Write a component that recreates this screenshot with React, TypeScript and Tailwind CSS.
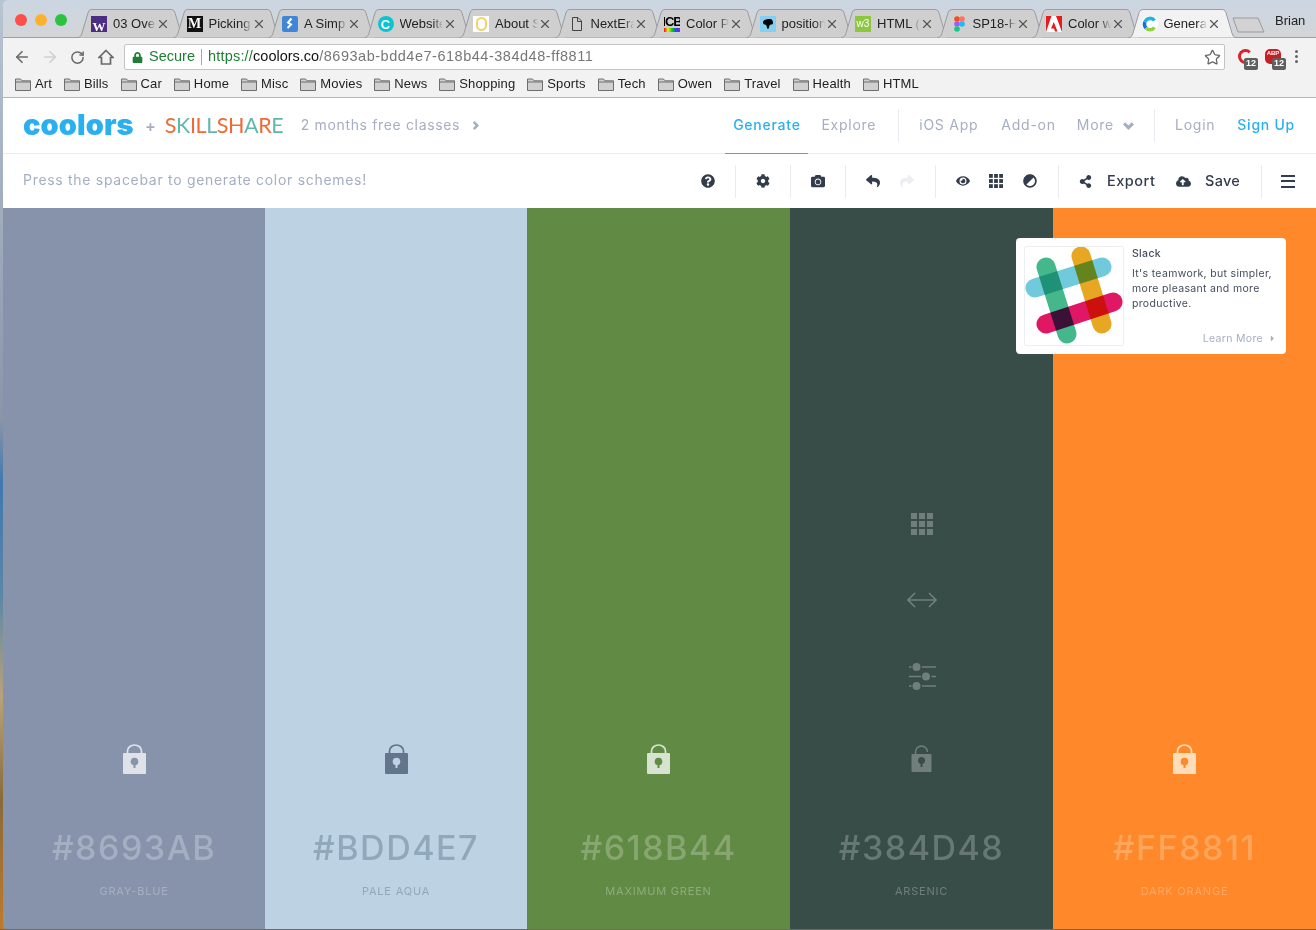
import React from "react";
import { ArrowLeft, ArrowRight, RotateCw, Star, X } from "lucide-react";
import { FaQuestionCircle, FaCog, FaCamera, FaReply, FaShare, FaEye, FaAdjust, FaShareAlt, FaCloudUploadAlt, FaLock, FaCaretRight } from "react-icons/fa";

const gotham = "font-['Inter',sans-serif]";

function Box({ className, children }: { className: string; children?: React.ReactNode }) {
  return <div className={`flex h-[16px] w-[16px] shrink-0 items-center justify-center overflow-hidden ${className}`}>{children}</div>;
}

function Doc() {
  return (
    <svg width="16" height="16" viewBox="0 0 16 16" fill="none" stroke="#444" strokeWidth="1"><path d="M3.500 1.500h5.500l3.500 3.500v9.500h-9zM8.500 1.500v4h4" /></svg>
  );
}

function Fig() {
  return (
    <svg width="16" height="16" viewBox="0 0 16 16">
      <circle cx="6" cy="3" r="2.800" fill="#f24e1e" /><circle cx="11" cy="3" r="2.800" fill="#ff7262" />
      <circle cx="6" cy="8" r="2.800" fill="#a259ff" /><circle cx="11" cy="8" r="2.800" fill="#1abcfe" />
      <circle cx="6" cy="13" r="2.800" fill="#0acf83" />
    </svg>
  );
}

function Adobe() {
  return (
    <svg width="16" height="16" viewBox="0 0 16 16">
      <rect width="16" height="16" fill="#fff" />
      <polygon points="0,0 5.500,0 0,16" fill="#e61b1b" /><polygon points="10,0 16,0 16,16" fill="#e61b1b" /><polygon points="7.800,6 11.500,15.500 9,15.500 8,12.500 5,12.500" fill="#e61b1b" />
    </svg>
  );
}

function CoolorsFav() {
  return (
    <svg width="16" height="16" viewBox="0 0 16 16" fill="none" strokeWidth="3.500">
      <circle cx="8" cy="8" r="8" fill="#fff" />
      <path d="M12.500 4.500A5.500 5.500 0 0 0 3 6" stroke="#1fb6d8" /><path d="M3 6a5.500 5.500 0 0 0 1 6" stroke="#1b6fd8" /><path d="M4 12a5.500 5.500 0 0 0 8.500 -.5" stroke="#8fd43a" />
    </svg>
  );
}

function Simp() {
  return (
    <svg width="16" height="16" viewBox="0 0 16 16" fill="none" stroke="#fff" strokeWidth="2"><rect width="16" height="16" rx="2" fill="#3f86d8" stroke="none" /><path d="M9.500 2.500L6 6.500l3 2-3.500 3.500" /></svg>
  );
}

function Bird() {
  return (
    <svg width="16" height="16" viewBox="0 0 16 16"><rect width="16" height="16" fill="#84d0f2" /><path d="M3 6c1-3 5-3 7-3s3 2 3 4-2 1-3 2-1 4-2 4-1-3-2-4-3 0-3-3z" fill="#000" /></svg>
  );
}

function Chevron({ down, className, size = 9 }: { down?: boolean; className?: string; size?: number }) {
  return (
    <svg className={className} width={size} height={size} viewBox="0 0 10 10" fill="none" stroke="#a5afc1" strokeWidth="2.800">
      <path d={down ? "M1 3l4 4 4-4" : "M3 1l4 4-4 4"} />
    </svg>
  );
}

const tabs: { t: string; icon: React.ReactNode }[] = [
  { t: "03 Ove", icon: <Box className="bg-[#4b2e83] !items-end"><span className="font-['Liberation_Serif',serif] text-[13px] font-bold leading-[11px] text-white">W</span></Box> },
  { t: "Picking", icon: <Box className="bg-[#111]"><span className="font-['Liberation_Serif',serif] text-[14px] font-bold leading-none text-white">M</span></Box> },
  { t: "A Simp", icon: <Simp /> },
  { t: "Website", icon: <Box className="rounded-full bg-[#0cc4cf]"><span className="font-['Liberation_Sans',sans-serif] text-[13px] font-bold leading-none text-white">C</span></Box> },
  { t: "About S", icon: <Box className="bg-white"><span className="block h-[14px] w-[11px] rounded-full border-[2px] border-[#f2d36b]" /></Box> },
  { t: "NextEra", icon: <Doc /> },
  { t: "Color P", icon: <div className="flex h-[16px] w-[16px] shrink-0 flex-col items-center overflow-hidden"><span className="font-['Liberation_Sans',sans-serif] text-[13px] font-bold leading-[12px] tracking-[-1px] text-black">ICB</span><span className="h-[4px] w-full bg-[linear-gradient(90deg,#e11,#ee1_25%,#1c1_50%,#15e_75%,#a1e)]" /></div> },
  { t: "position", icon: <Bird /> },
  { t: "HTML (", icon: <Box className="bg-[#8dc63f]"><span className="font-['Liberation_Sans',sans-serif] text-[10px] leading-none text-white">w3</span></Box> },
  { t: "SP18-H", icon: <Fig /> },
  { t: "Color w", icon: <Adobe /> },
  { t: "Genera", icon: <CoolorsFav /> },
];

function Tab({ t, icon, active }: { t: string; icon: React.ReactNode; active?: boolean }) {
  return (
    <div className={`relative flex h-[28px] w-[95.500px] shrink-0 items-center pl-[14px] pt-[2px] font-['Liberation_Sans',sans-serif] text-[13px] text-[#222] ${active ? "z-10" : ""}`}>
      <svg className="absolute left-0 top-0" width="109" height="29" viewBox="0 0 109 30" preserveAspectRatio="none">
        <path d="M0.500 29.500C3 29.500 4 28 5 25L11 4C12 1 13 .5 16 .5H93C96 .5 97 1 98 4L104 25C105 28 106 29.500 108.500 29.500" fill={active ? "#f2f2f2" : "#cfcfcf"} stroke="#9a9a9a" strokeWidth="1" />
      </svg>
      <div className="relative flex w-[22px] shrink-0 items-center">{icon}</div>
      <div className="relative w-[43px] shrink-0 whitespace-nowrap">
        <span className="inline-block [mask-image:linear-gradient(90deg,#000_33px,transparent_43px)]">{t}</span>
      </div>
      <X className="relative" size={14} strokeWidth={2} color="#555" />
    </div>
  );
}

function Folder() {
  return (
    <svg width="16" height="13" viewBox="0 0 16 13" fill="#d0d0d0" stroke="#6e6e6e" strokeWidth="1"><path d="M.5 12.500v-11.500h5l1.500 1.800h8.500v9.700z" /><path d="M.5 4h15" fill="none" /></svg>
  );
}

const bookmarks = ["Art", "Bills", "Car", "Home", "Misc", "Movies", "News", "Shopping", "Sports", "Tech", "Owen", "Travel", "Health", "HTML"];

function Divider({ className = "" }: { className?: string }) {
  return <div className={`h-[33px] w-px shrink-0 bg-[#e8ebef] ${className}`} />;
}

function Grid3({ size, className }: { size: number; className?: string }) {
  return (
    <svg width={size} height={size} viewBox="0 0 22 22" fill="currentColor" className={className}>
      {[0, 8, 16].map((y) => [0, 8, 16].map((x) => <rect key={`${x}-${y}`} x={x} y={y} width="6" height="6" />))}
    </svg>
  );
}

function LockIcon({ open, fg, cut }: { open?: boolean; fg: string; cut: string }) {
  if (open) {
    return (
      <svg width="23" height="30" viewBox="0 0 23 30" fill="none">
        <path d="M5.500 10V8a6 6 0 0 1 12 0" stroke={fg} strokeWidth="1.500" />
        <rect x="1.500" y="10" width="20" height="18" rx="1" fill={fg} />
        <circle cx="11.500" cy="16.500" r="3.500" fill={cut} />
        <rect x="10.500" y="17" width="2" height="6" fill={cut} />
      </svg>
    );
  }
  return (
    <svg width="23" height="30" viewBox="0 0 23 30" fill="none">
      <path d="M4.500 10V7a7 6 0 0 1 14 0v3" stroke={fg} strokeWidth="1.700" />
      <rect x="0" y="9" width="23" height="21" rx="1" fill={fg} />
      <circle cx="11.500" cy="17.500" r="3.800" fill={cut} />
      <rect x="10.500" y="18" width="2" height="6" fill={cut} />
    </svg>
  );
}

function Sliders() {
  return (
    <svg width="28" height="27" viewBox="0 0 28 27" fill="none" stroke="currentColor" strokeWidth="1.500">
      <path d="M1 4h2.500M14 4h14M1 13.500h12M23.500 13.500h4.500M1 23h2.500M14 23h14" />
      <circle cx="8.500" cy="4" r="4" fill="currentColor" stroke="none" /><circle cx="18" cy="13.500" r="4" fill="currentColor" stroke="none" /><circle cx="8.500" cy="23" r="4" fill="currentColor" stroke="none" />
    </svg>
  );
}

function Arrows() {
  return (
    <svg width="30" height="16" viewBox="0 0 30 16" fill="none" stroke="currentColor" strokeWidth="1.700"><path d="M1 8h28M8 1L1 8l7 7M22 1l7 7-7 7" /></svg>
  );
}

function SlackLogo() {
  return (
    <svg width="98" height="98" viewBox="0 0 98 98" fill="none" strokeWidth="19" strokeLinecap="round">
      <line x1="21" y1="20" x2="42" y2="87" stroke="#44b78b" className="mix-blend-multiply" />
      <line x1="56" y1="9" x2="77" y2="77" stroke="#e8a723" className="mix-blend-multiply" />
      <line x1="10" y1="41" x2="77" y2="20" stroke="#70cadb" className="mix-blend-multiply" />
      <line x1="21" y1="77" x2="88" y2="55" stroke="#e01765" className="mix-blend-multiply" />
    </svg>
  );
}

const columns = [
  { hex: "#8693AB", cut: "#8693ab", name: "GRAY-BLUE", bg: "w-[262px] rounded-bl-[4px] bg-[#8693ab]", text: "text-[#a5afc1]", sub: "text-[#a5afc1]", lockFg: "#dfe3e9" },
  { hex: "#BDD4E7", cut: "#bdd3e4", name: "PALE AQUA", bg: "w-[262px] bg-[#bdd3e4]", text: "text-[#91a8ba]", sub: "text-[#91a8ba]", lockFg: "#63758a" },
  { hex: "#618B44", cut: "#618b44", name: "MAXIMUM GREEN", bg: "w-[263px] bg-[#618b44]", text: "text-[#88a672]", sub: "text-[#8fab7b]", lockFg: "#d8e2d0" },
  { hex: "#384D48", cut: "#384d48", name: "ARSENIC", bg: "w-[263px] bg-[#384d48]", text: "text-[#677874]", sub: "text-[#707f7c]", lockFg: "#717f7c", open: true },
  { hex: "#FF8811", cut: "#fe882a", name: "DARK ORANGE", bg: "flex-1 bg-[#fe882a]", text: "text-[#ffa55c]", sub: "text-[#ffa864]", lockFg: "#ffddb9" },
];

const skill: [string, string][] = [["S", "#ee6a36"], ["K", "#5fb8ae"], ["I", "#ee6a36"], ["L", "#ee6a36"], ["L", "#5fb8ae"], ["S", "#ee6a36"], ["H", "#ee6a36"], ["A", "#5fb8ae"], ["R", "#ee6a36"], ["E", "#5fb8ae"]];

export default function App() {
  return (
    <div className="relative flex h-[930px] w-[1316px] overflow-hidden bg-[linear-gradient(#b7c4d2_0%,#8a96a8_45%,#3f78b0_52%,#5b87a8_64%,#b9a27a_75%,#8a6a3a_86%,#c07a28_100%)]">
      <div className="flex h-full w-full flex-col border-b border-[#6b6b6b] pl-[3px]">
        {/* tab strip */}
        <div className="flex h-[38px] shrink-0 items-end rounded-tl-[5px] border-b border-[#a0a0a0] bg-[linear-gradient(#cbd6e2,#d3d5d8)] pl-[12px]">
          <div className="mb-[11px] flex w-[62px] shrink-0 gap-[8px]">
            <span className="h-[12px] w-[12px] rounded-full bg-[#fc4f4a]" />
            <span className="h-[12px] w-[12px] rounded-full bg-[#fdb12f]" />
            <span className="h-[12px] w-[12px] rounded-full bg-[#2ac23f]" />
          </div>
          {tabs.map((x, i) => (
            <Tab key={i} t={x.t} icon={x.icon} active={i === tabs.length - 1} />
          ))}
          <svg className="mb-[4px] ml-[9px] shrink-0" width="33" height="16" viewBox="0 0 33 16" fill="#d2d2d2" stroke="#9a9a9a"><path d="M1 1h25l6 14H6z" /></svg>
          <span className="mb-[7px] ml-[10px] font-['Liberation_Sans',sans-serif] text-[13px] text-[#222]">Brian</span>
        </div>
        {/* address row */}
        <div className="flex h-[32px] shrink-0 items-center bg-[#f2f2f2] pl-[10px] pt-[6px]">
          <ArrowLeft size={18} strokeWidth={2.200} color="#6a6a6a" />
          <ArrowRight className="ml-[10px]" size={18} strokeWidth={2.200} color="#cfcfcf" />
          <RotateCw className="ml-[11px]" size={15} strokeWidth={2.400} color="#6a6a6a" />
          <svg className="ml-[13px]" width="16" height="16" viewBox="0 0 16 16" fill="none" stroke="#6a6a6a" strokeWidth="1.700"><path d="M8 1.500L15 8.500H12.500V15H3.500V8.500H1Z" /></svg>
          <div className="ml-[10px] flex h-[26px] w-[1101px] shrink-0 items-center rounded-[2px] border border-[#c4c4c4] bg-white pl-[7px] pr-[3px] font-['Liberation_Sans',sans-serif] text-[14.500px]">
            <FaLock size={11} color="#1e7e34" />
            <span className="ml-[6px] text-[#1e7e34]">Secure</span>
            <span className="mx-[6px] h-[16px] w-px bg-[#a8a8a8]" />
            <span className="tracking-[0.200px] text-[#1e7e34]">https://</span>
            <span className="text-[#111]">coolors.co</span>
            <span className="tracking-[0.520px] text-[#777]">/8693ab-bdd4e7-618b44-384d48-ff8811</span>
            <Star className="ml-auto" size={17} strokeWidth={1.800} color="#666" />
          </div>
          <div className="relative ml-[13px] h-[22px] w-[24px]">
            <div className="absolute left-0 top-[3px] h-[15px] w-[15px] rounded-full border-[3px] border-[#d8232a] border-r-transparent" />
            <span className="absolute left-[6px] top-[12px] flex h-[12px] w-[14px] items-center justify-center rounded-[2px] bg-[#5f5f5f] font-['Liberation_Sans',sans-serif] text-[9px] font-bold text-white">12</span>
          </div>
          <div className="relative ml-[3px] h-[22px] w-[24px]">
            <div className="absolute left-0 top-[3px] flex h-[15px] w-[16px] justify-center rounded-[5px] bg-[#c81e25] pt-[1px] font-['Liberation_Sans',sans-serif] text-[6px] font-bold leading-[7px] text-white">ABP</div>
            <span className="absolute left-[7px] top-[12px] flex h-[12px] w-[14px] items-center justify-center rounded-[2px] bg-[#5f5f5f] font-['Liberation_Sans',sans-serif] text-[9px] font-bold text-white">12</span>
          </div>
          <div className="ml-[6px] flex flex-col gap-[2px] pb-[1px]">
            <span className="h-[3px] w-[3px] rounded-full bg-[#666]" /><span className="h-[3px] w-[3px] rounded-full bg-[#666]" /><span className="h-[3px] w-[3px] rounded-full bg-[#666]" />
          </div>
        </div>
        {/* bookmarks */}
        <div className="flex h-[28px] shrink-0 items-center gap-[12px] border-b border-[#b5b5b5] bg-[#f2f2f2] pl-[12px] pt-[1px] font-['Liberation_Sans',sans-serif] text-[13px] tracking-[0.130px] text-[#222]">
          {bookmarks.map((b) => (
            <div key={b} className="flex items-center gap-[4px]"><Folder /><span>{b}</span></div>
          ))}
        </div>
        {/* site nav */}
        <div className={`flex h-[56px] shrink-0 items-center border-b border-[#e8ebef] bg-white pl-[20px] ${gotham}`}>
          <span className="mb-[2px] w-[110px] whitespace-nowrap font-['Inter',sans-serif] text-[29px] font-black leading-none tracking-[0.100px] text-[#2ab0f0]">coolors</span>
          <span className="ml-[12px] text-[16px] font-semibold text-[#a5afc1]">+</span>
          <span className="ml-[9px] flex w-[120px] font-['Lato',sans-serif] text-[21.500px] leading-none tracking-[-0.400px]">
            {skill.map(([c, col], i) => <span key={i} style={{ color: col }}>{c}</span>)}
          </span>
          <span className="mb-[3px] ml-[16px] text-[14px] tracking-[0.650px] text-[#a5afc1]">2 months free classes</span>
          <Chevron className="ml-[11px]" />
          <div className="ml-auto flex h-full items-center text-[14px] tracking-[0.750px]">
            <div className="relative flex h-full w-[83px] items-center justify-center pb-[3px] font-medium text-[#2ab0f0]">
              Generate
              <span className="absolute bottom-[-1px] left-0 right-0 h-px bg-[#2ab0f0]" />
            </div>
            <span className="mb-[3px] ml-[13px] text-[#a5afc1]">Explore</span>
            <Divider className="ml-[22px]" />
            <span className="mb-[3px] ml-[20px] text-[#a5afc1]">iOS App</span>
            <span className="mb-[3px] ml-[23px] text-[#a5afc1]">Add-on</span>
            <span className="mb-[3px] ml-[21px] text-[#a5afc1]">More</span>
            <Chevron down className="ml-[9px]" size={11} />
            <Divider className="ml-[20px]" />
            <span className="mb-[3px] ml-[20px] text-[#a5afc1]">Login</span>
            <span className="mb-[3px] ml-[22px] mr-[21px] font-medium text-[#2ab0f0]">Sign Up</span>
          </div>
        </div>
        {/* toolbar */}
        <div className={`flex h-[54px] shrink-0 items-center bg-white pl-[20px] text-[#323c4b] ${gotham}`}>
          <span className="mb-[4px] text-[14px] tracking-[0.700px] text-[#a5afc1]">Press the spacebar to generate color schemes!</span>
          <div className="ml-auto flex items-center">
            <FaQuestionCircle size={14} />
            <Divider className="ml-[20px]" />
            <FaCog className="ml-[20px]" size={14} />
            <Divider className="ml-[20px]" />
            <FaCamera className="ml-[20px]" size={14} />
            <Divider className="ml-[20px]" />
            <FaReply className="ml-[20px]" size={14} />
            <FaShare className="ml-[20px] text-[#eceef2]" size={14} />
            <Divider className="ml-[21px]" />
            <FaEye className="ml-[20px]" size={14} />
            <Grid3 size={14} className="ml-[19px]" />
            <FaAdjust className="ml-[20px] rotate-45" size={14} />
            <Divider className="ml-[21px]" />
            <FaShareAlt className="ml-[20px]" size={13} />
            <span className="ml-[15px] w-[49px] whitespace-nowrap text-[14.500px] font-medium tracking-[0.500px]">Export</span>
            <FaCloudUploadAlt className="ml-[20px]" size={15} />
            <span className="ml-[14px] w-[35px] whitespace-nowrap text-[14.500px] font-medium tracking-[0.300px]">Save</span>
            <Divider className="ml-[21px]" />
            <div className="ml-[19px] mr-[21px] flex w-[14px] flex-col gap-[3.500px]">
              <span className="h-[2px] bg-[#323c4b]" /><span className="h-[2px] bg-[#323c4b]" /><span className="h-[2px] bg-[#323c4b]" />
            </div>
          </div>
        </div>
        {/* columns */}
        <div className={`relative flex min-h-0 flex-1 ${gotham}`}>
          {columns.map((c) => (
            <div key={c.hex} className={`flex flex-col items-center justify-end pb-[31px] ${c.bg}`}>
              {c.open && (
                <div className="mb-[30px] flex flex-col items-center text-[#717f7c]">
                  <div className="flex h-[76px] items-center"><Grid3 size={22} /></div>
                  <div className="flex h-[76px] items-center"><Arrows /></div>
                  <div className="flex h-[76px] items-center"><Sliders /></div>
                </div>
              )}
              <LockIcon open={c.open} fg={c.lockFg} cut={c.cut} />
              <div className={`mt-[54px] text-[34px] font-medium leading-[40px] tracking-[1.500px] ${c.text}`}>{c.hex}</div>
              <div className={`mt-[16px] text-[11px] leading-[14px] tracking-[0.800px] ${c.sub}`}>{c.name}</div>
            </div>
          ))}
          {/* ad */}
          <div className="absolute right-[30px] top-[30px] flex h-[116px] w-[270px] rounded-[4px] bg-white p-[8px]">
            <div className="flex h-[100px] w-[100px] shrink-0 items-center justify-center rounded-[2px] border border-[#eceef1]"><SlackLogo /></div>
            <div className="ml-[8px] flex flex-1 flex-col text-[10.500px] leading-[15px] tracking-[0.330px] text-[#434c5c]">
              <span className="font-medium">Slack</span>
              <span className="mt-[5px]">It's teamwork, but simpler, more pleasant and more productive.</span>
              <span className="mt-auto flex items-center justify-end gap-[5px] pr-[1px] text-[#a5afc1]">Learn More <FaCaretRight size={9} /></span>
            </div>
          </div>
        </div>
      </div>
    </div>
  );
}
